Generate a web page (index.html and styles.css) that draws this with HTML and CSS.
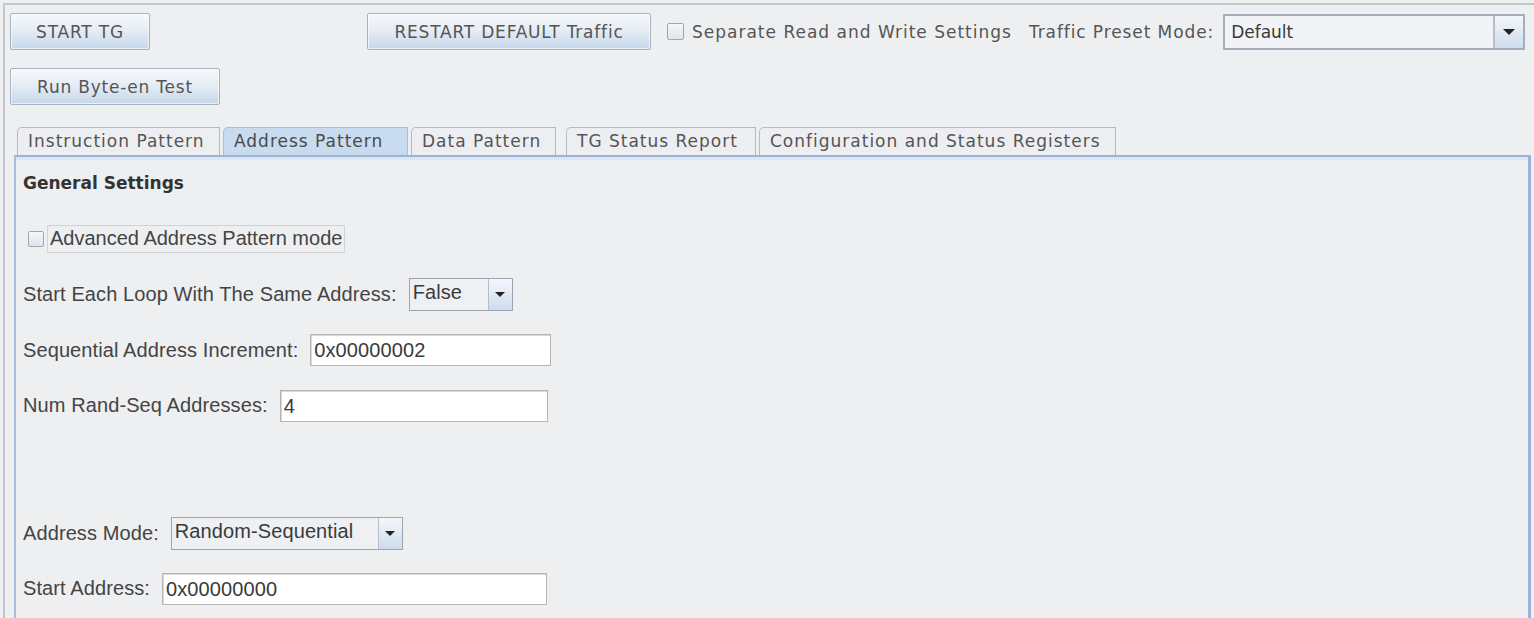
FILE: index.html
```html
<!DOCTYPE html>
<html lang="en">
<head>
  <meta charset="UTF-8" />
  <title>Traffic Generator</title>
  <link rel="stylesheet" href="styles.css">
</head>
<body>
  <div class="window">
    <div class="toolbar">
      <button class="btn btn-start">START TG</button>
      <button class="btn btn-restart">RESTART DEFAULT Traffic</button>
      <label class="check top-check"><span class="box"></span>Separate Read and Write Settings</label>
      <span class="preset-label">Traffic Preset Mode:</span>
      <div class="combo preset">
        <span class="combo-value">Default</span>
        <span class="combo-arrow"><i></i></span>
      </div>
    </div>
    <div class="toolbar second">
      <button class="btn btn-byte">Run Byte-en Test</button>
    </div>

    <div class="tabs">
      <div class="tab">Instruction Pattern</div>
      <div class="tab active">Address Pattern</div>
      <div class="tab">Data Pattern</div>
      <div class="tab">TG Status Report</div>
      <div class="tab">Configuration and Status Registers</div>
    </div>

    <div class="panel">
      <div class="section-title">General Settings</div>
      <div class="row check-row">
        <label class="check adv"><span class="box small"></span><span class="focus">Advanced Address Pattern mode</span></label>
      </div>
      <div class="row">
        <span class="label">Start Each Loop With The Same Address:</span>
        <div class="combo small-combo w-false">
          <span class="combo-value">False</span>
          <span class="combo-arrow"><i></i></span>
        </div>
      </div>
      <div class="row">
        <span class="label">Sequential Address Increment:</span>
        <div class="field w-seq">0x00000002</div>
      </div>
      <div class="row">
        <span class="label">Num Rand-Seq Addresses:</span>
        <div class="field w-num">4</div>
      </div>
      <div class="spacer"></div>
      <div class="row">
        <span class="label">Address Mode:</span>
        <div class="combo small-combo w-mode">
          <span class="combo-value">Random-Sequential</span>
          <span class="combo-arrow"><i></i></span>
        </div>
      </div>
      <div class="row">
        <span class="label">Start Address:</span>
        <div class="field w-start">0x00000000</div>
      </div>
    </div>
  </div>
</body>
</html>
```

FILE: styles.css
```css
* { margin: 0; padding: 0; box-sizing: border-box; }
html, body { height: 100%; overflow: hidden; }
body {
  background: #eeeff1;
  font-family: 'DejaVu Sans', sans-serif;
  color: #505050;
}
.window {
  display: flex;
  flex-direction: column;
  margin: 3px 0 0 3px;
  height: calc(100vh - 3px);
  border-top: 2px solid #c3c6cb;
  border-left: 2px solid #c3c6cb;
  padding: 8px 0 0 5px;
}
.toolbar {
  display: flex;
  align-items: center;
  height: 37px;
  flex-shrink: 0;
}
.toolbar.second { margin-top: 18px; }
.btn {
  height: 37px;
  font-family: 'DejaVu Sans', sans-serif;
  font-size: 17px;
  letter-spacing: 0.8px;
  color: #555;
  border: 1px solid #a9b3c0;
  border-radius: 2px;
  background: linear-gradient(#f6f8fb, #e6edf5 45%, #c6d7ea);
  box-shadow: inset 0 0 0 1px rgba(255,255,255,0.6);
}
.btn-start { width: 140px; }
.btn-restart { width: 284px; margin-left: 217px; }
.btn-byte { width: 210px; }
.check {
  display: flex;
  align-items: center;
  font-size: 17px;
  letter-spacing: 1px;
  color: #555;
}
.top-check { margin-left: 16px; }
.box {
  width: 17px;
  height: 17px;
  border: 1px solid #9ea6b2;
  border-radius: 2px;
  background: linear-gradient(#f4f6f9, #dfe5ec);
  margin-right: 8px;
}
.preset-label { margin-left: 17px; font-size: 17px; letter-spacing: 0.9px; color: #555; }
.combo {
  display: flex;
  border: 2px solid #a3aebc;
  background: #f2f3f6;
}
.preset { width: 302px; height: 36px; margin-left: 9px; }
.combo-value {
  flex: 1;
  padding: 6px 0 0 6px;
  font-size: 17px;
  color: #3a3a3a;
}
.combo-arrow {
  width: 30px;
  border-left: 2px solid #b5bec9;
  background: linear-gradient(#f4f7fb, #cddcec);
  display: flex;
  align-items: center;
  justify-content: center;
}
.combo-arrow i {
  border-left: 6px solid transparent;
  border-right: 6px solid transparent;
  border-top: 6px solid #222;
}

.tabs {
  display: flex;
  align-items: flex-end;
  margin: 22px 0 0 7px;
  height: 28px;
  flex-shrink: 0;
}
.tab {
  height: 28px;
  padding: 0 10px;
  font-size: 17px;
  letter-spacing: 1px;
  line-height: 27px;
  white-space: nowrap;
  color: #555;
  background: #eceef1;
  border: 1px solid #b6bcc4;
  border-bottom: none;
  border-radius: 5px 0 0 0;
  margin-right: 3px;
}
.tab:nth-child(1) { width: 203px; }
.tab:nth-child(2) { width: 185px; }
.tab:nth-child(3) { width: 145px; }
.tab:nth-child(4) { width: 190px; margin-left: 7px; }
.tab:nth-child(5) { width: 357px; margin-right: 0; }
.tab.active {
  background: #c8dbef;
  border-color: #a8bfdb;
  color: #4a4a4a;
}

.panel {
  flex: 1;
  margin-left: 4px;
  width: 1517px;
  border-top: 2px solid #9db3d6;
  border-left: 2px solid #a9bedd;
  border-right: 3px solid #9db3d6;
  box-shadow: inset 0 3px 0 #dde7f3;
  padding: 16px 0 0 7px;
  font-family: 'Liberation Sans', Arial, sans-serif;
  color: #444;
}
.section-title {
  font-family: 'DejaVu Sans', sans-serif;
  font-weight: bold;
  font-size: 17px;
  color: #333;
  height: 24px;
}
.row {
  display: flex;
  align-items: center;
  height: 32px;
  margin-top: 23.5px;
  font-size: 20px;
  letter-spacing: 0.1px;
}
.check-row { margin-top: 26px; }
.adv {
  font-family: 'Liberation Sans', Arial, sans-serif;
  font-size: 20px;
  letter-spacing: 0;
  color: #444;
  margin-left: 5px;
}
.adv .box { width: 16px; height: 16px; margin-right: 3px; }
.focus { border: 1px solid #cfd2d6; padding: 1px 2px 2px 2px; }
.label { margin-right: 12px; }
.small-combo { height: 33px; border-width: 1px; border-color: #9aa5b3; background: #eef0f3; }
.small-combo .combo-value { padding: 2px 0 0 3px; font-size: 20px; font-family: 'Liberation Sans', Arial, sans-serif; color: #3a3a3a; }
.small-combo .combo-arrow { width: 24px; border-left: 1px solid #b5bec9; }
.small-combo .combo-arrow i { border-left-width: 5px; border-right-width: 5px; border-top-width: 5px; }
.w-false { width: 104px; }
.w-mode { width: 232px; }
.field {
  height: 32px;
  background: #fff;
  border: 1px solid #b4b4b4;
  box-shadow: inset 1px 1px 0 #d8d8d8;
  padding: 4px 0 0 3px;
  color: #3a3a3a;
}
.w-seq { width: 241px; }
.w-num { width: 268px; }
.w-start { width: 385px; }
.spacer { height: 72px; }
```
